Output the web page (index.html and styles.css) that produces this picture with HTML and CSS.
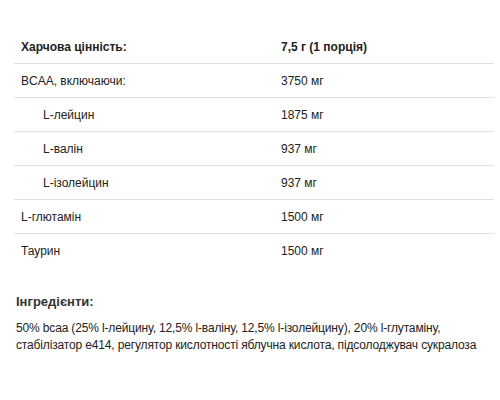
FILE: index.html
```html
<!DOCTYPE html>
<html lang="uk">
<head>
<meta charset="utf-8">
<link rel="stylesheet" href="styles.css">
</head>
<body>
<div class="page">
  <table class="nutri">
    <colgroup><col class="c1"><col class="c2"></colgroup>
    <thead>
      <tr><th>Харчова цінність:</th><th>7,5 г (1 порція)</th></tr>
    </thead>
    <tbody>
      <tr><td>BCAA, включаючи:</td><td>3750 мг</td></tr>
      <tr><td class="sub">L-лейцин</td><td>1875 мг</td></tr>
      <tr><td class="sub">L-валін</td><td>937 мг</td></tr>
      <tr><td class="sub">L-ізолейцин</td><td>937 мг</td></tr>
      <tr><td>L-глютамін</td><td>1500 мг</td></tr>
      <tr><td>Таурин</td><td>1500 мг</td></tr>
    </tbody>
  </table>
  <h3 class="ing-title">Інгредієнти:</h3>
  <p class="ing-text">50% bcaa (25% l-лейцину, 12,5% l-валіну, 12,5% l-ізолейцину), 20% l-глутаміну, стабілізатор e414, регулятор кислотності яблучна кислота, підсолоджувач сукралоза</p>
</div>
</body>
</html>
```
FILE: styles.css
```css
html, body {
  margin: 0;
  padding: 0;
  background: #fff;
}
body {
  font-family: "Liberation Sans", Arial, sans-serif;
  color: #222;
  font-size: 12px;
}
.page {
  padding: 30px 6px 0 14px;
}
.nutri {
  width: 480px;
  border-collapse: collapse;
  table-layout: fixed;
}
.nutri .c1 {
  width: 260px;
}
.nutri .c2 {
  width: 220px;
}
.nutri th,
.nutri td {
  text-align: left;
  padding: 0 7px;
  height: 33px;
  border-bottom: 1px solid #dde2e7;
  vertical-align: middle;
}
.nutri th {
  font-weight: bold;
}
.nutri tbody tr:last-child td {
  border-bottom: none;
}
.nutri td.sub {
  padding-left: 29px;
}
.ing-title {
  margin: 26px 0 0 2px;
  font-size: 13px;
  font-weight: bold;
  line-height: 18px;
  color: #333;
}
.ing-text {
  margin: 9px 0 0 2px;
  line-height: 17px;
  width: 478px;
  letter-spacing: -0.15px;
}
```
